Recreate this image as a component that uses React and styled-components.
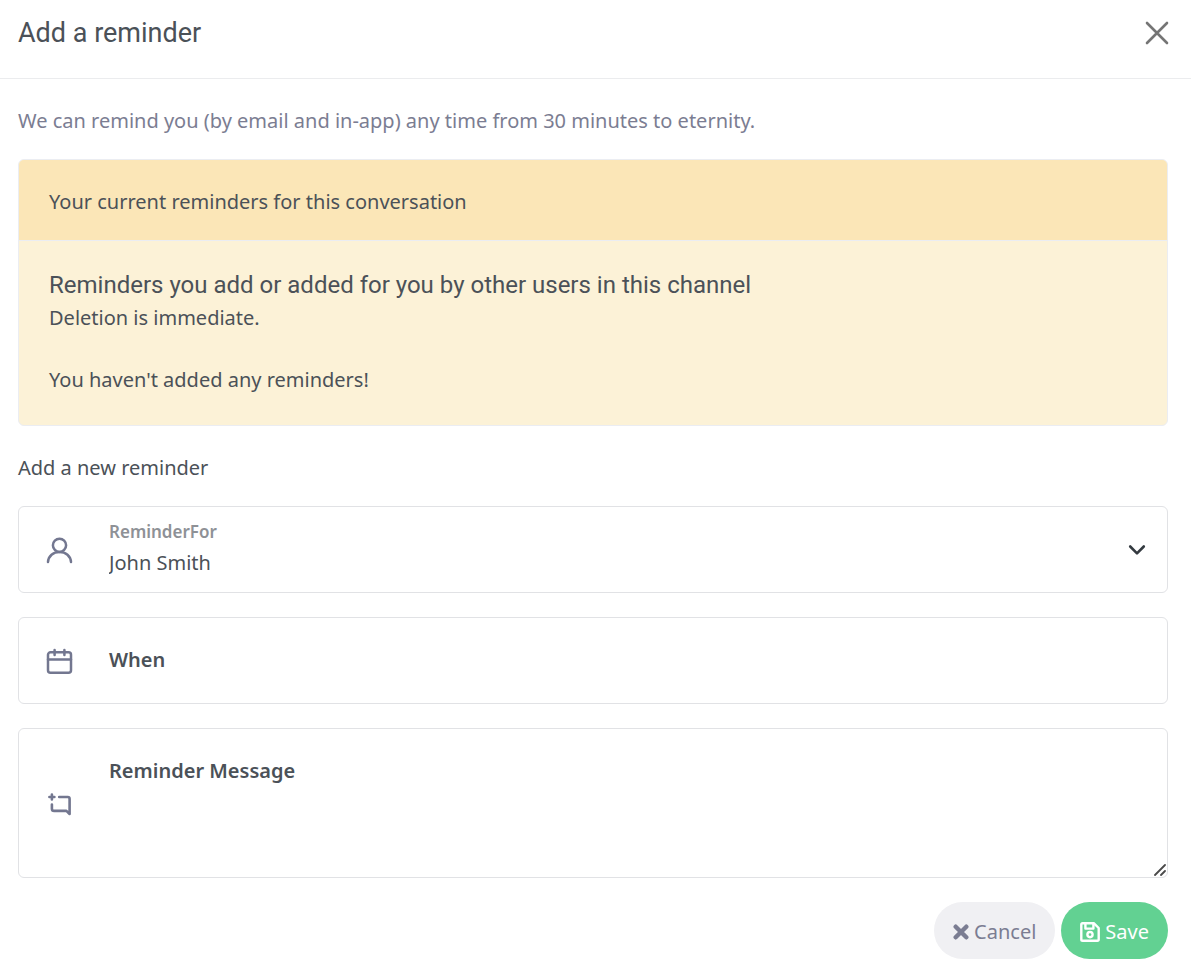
import React, { useState } from 'react';
import styled, { createGlobalStyle, css } from 'styled-components';

const GlobalStyle = createGlobalStyle`
  * {
    box-sizing: border-box;
  }
  body {
    margin: 0;
    background: #fff;
    color: #4b5158;
    font-family: 'Noto Sans', sans-serif;
    font-size: 20px;
    line-height: 32px;
  }
`;

const Header = styled.header`
  display: flex;
  align-items: flex-start;
  justify-content: space-between;
  padding: 17px 20px 26px 18px;
  border-bottom: 1px solid #ebecee;
`;

const Title = styled.h1`
  margin: 0;
  font: 400 27px/32px Roboto, sans-serif;
`;

const CloseButton = styled.button`
  display: flex;
  padding: 3px 0 4px;
  border: 0;
  background: none;
  color: #757575;
  cursor: pointer;
`;

const Body = styled.form`
  padding: 26px 23px 20px 18px;
`;

const Intro = styled.p`
  margin: 0 0 22px;
  color: #7b7d92;
`;

const Card = styled.section`
  margin-bottom: 26px;
  border: 1px solid #ebedf2;
  border-radius: 6px;
  background: #fcf2d7;
  overflow: hidden;
`;

const CardHeader = styled.div`
  padding: 26px 30px 22px;
  border-bottom: 1px solid #ebedf2;
  background: #fbe6b7;
`;

const CardBody = styled.div`
  padding: 28px 30px 29px;
`;

const CardTitle = styled.h2`
  margin: 0;
  font: 400 24px/33px Roboto, sans-serif;
`;

const Text = styled.p`
  margin: 0;

  & + & {
    margin-top: 30px;
  }
`;

const SectionTitle = styled.h3`
  margin: 0 0 22px;
  font-size: 20px;
  font-weight: 400;
`;

// icon, label and control share the same cell, so the whole box is clickable
const Field = styled.div`
  display: grid;
  margin-bottom: 24px;
  color: #737790;

  & > * {
    grid-area: 1 / 1;
  }

  & > svg {
    align-self: center;
    pointer-events: none;
  }
`;

const FieldIcon = styled.svg`
  margin-left: 28px;
`;

const SelectArrow = styled.svg`
  justify-self: end;
  margin-right: 22px;
  color: #343a40;
`;

const ResizeHandle = styled.svg`
  && {
    align-self: end;
    justify-self: end;
    margin: 0 2px 2px 0;
    color: #4a4a4a;
  }
`;

const Label = styled.label`
  justify-self: start;
  align-self: start;
  margin: 27px 0 0 91px;
  color: #4b5158;
  font-weight: 600;
  pointer-events: none;

  ${({ $floating }) =>
    $floating &&
    css`
      margin-top: 14px;
      color: #8e9196;
      font-size: 17px;
      line-height: 24px;
    `}
`;

const controlStyle = css`
  width: 100%;
  min-width: 0;
  margin: 0;
  border: 1px solid #e1e2e5;
  border-radius: 6px;
  background: transparent;
  color: #4b5158;
  font: inherit;
  outline: none;

  &:focus-visible {
    border-color: #62d192;
  }
`;

const Select = styled.select`
  ${controlStyle}
  height: 87px;
  padding: 26px 60px 0 90px;
  appearance: none;
`;

const Input = styled.input`
  ${controlStyle}
  height: 87px;
  padding: 26px 30px 0 90px;
`;

const TextArea = styled.textarea`
  ${controlStyle}
  height: 150px;
  padding: 46px 30px 10px 90px;
  resize: vertical;

  &::-webkit-resizer {
    background: transparent;
  }
`;

const Actions = styled.div`
  display: flex;
  justify-content: flex-end;
  gap: 6px;
`;

const Button = styled.button`
  display: flex;
  align-items: center;
  gap: 5px;
  padding: 14px 19px 11px;
  border: 0;
  border-radius: 30px;
  background: ${({ $primary }) => ($primary ? '#62d192' : '#f0f0f3')};
  color: ${({ $primary }) => ($primary ? '#fff' : '#7b7d92')};
  font: inherit;
  cursor: pointer;
`;

const stroke = {
  fill: 'none',
  stroke: 'currentColor',
  strokeLinecap: 'round',
  strokeLinejoin: 'round',
  'aria-hidden': true,
};

const App = () => {
  const [person, setPerson] = useState('john');
  const [when, setWhen] = useState('');
  const [message, setMessage] = useState('');

  return (
    <>
      <GlobalStyle />
      <Header>
        <Title>Add a reminder</Title>
        <CloseButton type="button" aria-label="Close">
          <svg width="28" height="28" viewBox="0 0 28 28" {...stroke} strokeWidth="2.6">
            <path d="M4 3L24 23M24 3L4 23" />
          </svg>
        </CloseButton>
      </Header>
      <Body onSubmit={(e) => e.preventDefault()}>
        <Intro>
          We can remind you (by email and in-app) any time from 30 minutes to
          eternity.
        </Intro>
        <Card>
          <CardHeader>Your current reminders for this conversation</CardHeader>
          <CardBody>
            <CardTitle>
              Reminders you add or added for you by other users in this channel
            </CardTitle>
            <Text>Deletion is immediate.</Text>
            <Text>You haven't added any reminders!</Text>
          </CardBody>
        </Card>
        <SectionTitle>Add a new reminder</SectionTitle>

        <Field>
          <Select
            id="reminder-for"
            value={person}
            onChange={(e) => setPerson(e.target.value)}
          >
            <option value="john">John Smith</option>
          </Select>
          <Label htmlFor="reminder-for" $floating>
            ReminderFor
          </Label>
          <FieldIcon width="28" height="28" viewBox="0 0 28 28" {...stroke} strokeWidth="2.5">
            <circle cx="13.5" cy="9.3" r="6.6" />
            <path d="M2 26C2.4 20 7.2 15.9 13.5 15.9S24.6 20 25 26" />
          </FieldIcon>
          <SelectArrow width="18" height="12" viewBox="0 0 18 12" {...stroke} strokeWidth="2.6">
            <path d="M2.2 2.5L9 9.3L15.8 2.5" />
          </SelectArrow>
        </Field>

        <Field>
          <Input
            id="reminder-when"
            type="text"
            value={when}
            onChange={(e) => setWhen(e.target.value)}
          />
          <Label htmlFor="reminder-when">When</Label>
          <FieldIcon width="28" height="28" viewBox="0 0 28 28" {...stroke} strokeWidth="2.5">
            <rect x="2" y="5.3" width="23" height="20.5" rx="2.5" />
            <path d="M2 12.5H25M8.6 3V8M18.4 3V8" />
          </FieldIcon>
        </Field>

        <Field>
          <TextArea
            id="reminder-message"
            value={message}
            onChange={(e) => setMessage(e.target.value)}
          />
          <Label htmlFor="reminder-message">Reminder Message</Label>
          <FieldIcon width="28" height="28" viewBox="0 0 28 28" {...stroke} strokeWidth="2.6">
            <path d="M3.4 8H8.4M5.9 5.5V10.5" />
            <path d="M13.2 8H21.8Q23.6 8 23.6 9.8V25L20.4 21.9H8.1Q5.9 21.9 5.9 19.7V15.5" />
          </FieldIcon>
          <ResizeHandle width="12" height="12" viewBox="0 0 12 12" {...stroke} strokeWidth="1.8">
            <path d="M1 11L11 1M7 11L11 7" />
          </ResizeHandle>
        </Field>

        <Actions>
          <Button type="button">
            <svg width="16" height="16" viewBox="0 0 16 16" {...stroke} strokeWidth="4.4">
              <path d="M2.7 2.7L13.3 13.3M13.3 2.7L2.7 13.3" />
            </svg>
            Cancel
          </Button>
          <Button type="submit" $primary>
            <svg width="20" height="20" viewBox="0 0 20 20" {...stroke} strokeWidth="2.4">
              <path d="M2.6 1.3H14L18.7 6V17.3Q18.7 18.7 17.4 18.7H2.6Q1.3 18.7 1.3 17.4V2.6Q1.3 1.3 2.6 1.3Z" />
              <path d="M5.4 1.6V6.6H13.4V1.6" />
              <circle cx="10" cy="12.6" r="2.6" />
            </svg>
            Save
          </Button>
        </Actions>
      </Body>
    </>
  );
};

export default App;
